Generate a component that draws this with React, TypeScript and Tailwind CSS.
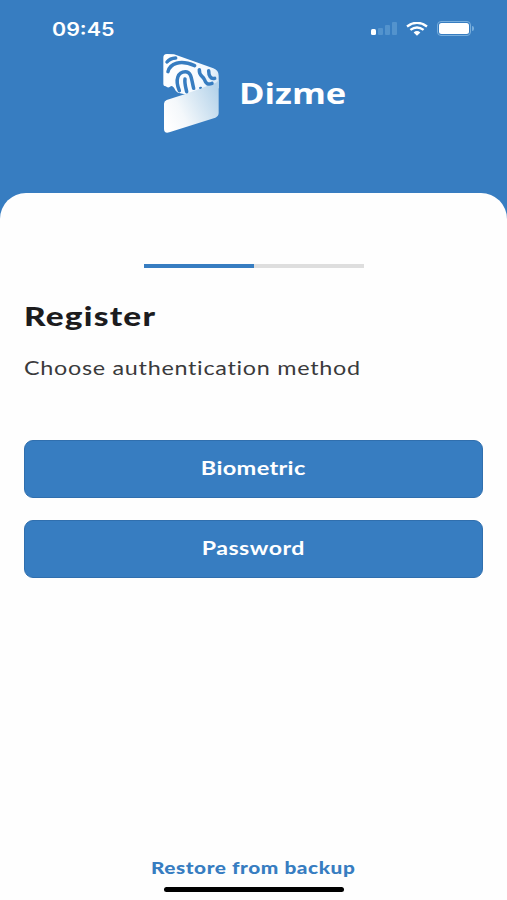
import React from 'react';

interface StretchedTextProps {
  children: React.ReactNode;
  className?: string;
}

const StretchedText: React.FC<StretchedTextProps> = ({ children, className = '' }) => (
  <span className={`inline-block whitespace-nowrap ${className}`}>{children}</span>
);

const DizmeLogo: React.FC = () => (
  <svg className="h-20 w-[58px]" viewBox="36 24 174 240" fill="none">
    <defs>
      <linearGradient id="fold" x1="42" y1="220" x2="206" y2="140" gradientUnits="userSpaceOnUse">
        <stop stopColor="#ffffff" />
        <stop offset="0.3" stopColor="#f4f8fb" />
        <stop offset="1" stopColor="#b5d3ea" />
      </linearGradient>
      <linearGradient id="top" x1="40" y1="60" x2="206" y2="120" gradientUnits="userSpaceOnUse">
        <stop stopColor="#ffffff" />
        <stop offset="0.7" stopColor="#f5faff" />
        <stop offset="1" stopColor="#d3e5f4" />
      </linearGradient>
    </defs>
    <path
      d="M40 38Q40 26 52 27L72 28L190 70Q206 76 206 92V130L104 148L84 143Q76 138 72 128Q66 120 60 125Q54 130 47 124Q40 124 40 118Z"
      fill="url(#top)"
    />
    <path d="M50 165L106 147L150 131L196 114Q206 110 206 100V204Q206 214 196 218L58 262Q42 266 42 252V176Q42 168 50 165Z" fill="url(#fold)" />
    <g stroke="#377dc1" strokeWidth="10.5" strokeLinecap="round">
      <path d="M51 51Q60 40 77 39" />
      <path d="M54 80C60 56 90 43 134 62" />
      <path d="M88 137C74 104 84 80 106 80C125 80 124 104 131 130" />
      <path d="M105 102C103 114 107 126 110 140" />
      <path d="M148 74C147 95 158 91 163 103C167 116 174 120 186 115" />
      <path d="M176 77C176 92 182 103 194 100" />
      <path d="M150 129L153 128" strokeWidth="6" />
    </g>
  </svg>
);

const StatusBar: React.FC = () => (
  <div className="flex h-[57px] items-center justify-between pl-[52px] pr-[33px] text-white">
    <StretchedText className="origin-left scale-x-[1.19] pt-px font-['Inter'] text-[18px] font-semibold">09:45</StretchedText>
    <div className="flex items-center">
      <div className="flex h-[13px] items-end gap-[2px]">
        <span className="h-[6px] w-[5px] rounded-[1.5px] bg-white" />
        <span className="h-[7px] w-[5px] rounded-[1px] bg-[#5393cd]" />
        <span className="h-[10px] w-[5px] rounded-[1px] bg-[#5393cd]" />
        <span className="h-[13px] w-[5px] rounded-[1px] bg-[#5393cd]" />
      </div>
      <svg className="ml-[9px] h-[14px] w-[22px]" viewBox="0 0 22 14" fill="none" stroke="#fff">
        <path d="M1 4.5Q11 -2.8 21 4.5" strokeWidth="2.4" />
        <path d="M4.4 7.9Q11 2.9 17.6 7.9" strokeWidth="2.4" />
        <path d="M7.6 10.5Q11 7.6 14.4 10.5L11 13.7Z" fill="#fff" stroke="none" />
      </svg>
      <div className="ml-[9px] flex h-[15px] w-[34px] rounded-[4px] border border-[#78aedc] p-px">
        <div className="flex-1 rounded-[2.5px] bg-white" />
      </div>
      <span className="ml-px h-[5px] w-[2px] rounded-r-full bg-[#78aedc]" />
    </div>
  </div>
);

const AuthButton: React.FC<{ label: string; textClass: string }> = ({ label, textClass }) => (
  <button className="flex h-[58px] w-full items-center justify-center rounded-[9px] border border-[#306fae] bg-[#377dc1] pb-0.5 text-white">
    <StretchedText className={`text-[19px] font-bold ${textClass}`}>{label}</StretchedText>
  </button>
);

const App: React.FC = () => {
  return (
    <div className="flex h-[900px] w-[507px] flex-col overflow-hidden bg-[#377dc1] font-['Lato',sans-serif]">
      <header className="h-[192.5px] shrink-0">
        <StatusBar />
        <div className="-mt-1 flex items-center pl-[162px] text-white">
          <DizmeLogo />
          <StretchedText className="ml-[19px] origin-left scale-x-[1.19] font-['Open_Sans'] text-[29px] font-bold leading-9">
            Dizme
          </StretchedText>
        </div>
      </header>

      <main className="flex flex-1 flex-col rounded-t-[26px] bg-[#fefefe] px-6">
        <div className="mt-[71.5px] flex h-1 w-[220px] self-center bg-[#dedede]">
          <div className="w-1/2 bg-[#377dc1]" />
        </div>
        <h1 className="mt-[32px] h-8 text-[26.5px] font-black leading-8 text-[#1c1c1e]">
          <StretchedText className="origin-left scale-x-[1.26] tracking-[0.95px]">Register</StretchedText>
        </h1>
        <p className="mt-[22px] h-7 text-[19.5px] leading-7 text-[#3a3a3c]">
          <StretchedText className="origin-left scale-x-[1.197] tracking-[0.6px]">Choose authentication method</StretchedText>
        </p>
        <div className="mt-[58px] flex flex-col gap-[22px]">
          <AuthButton label="Biometric" textClass="scale-x-[1.24] tracking-[0.25px]" />
          <AuthButton label="Password" textClass="scale-x-[1.22] tracking-[0.4px]" />
        </div>
        <footer className="mt-auto flex flex-col items-center pb-2">
          <a className="h-6 text-[16.5px] font-black leading-6 text-[#377dc1]">
            <StretchedText className="scale-x-[1.26] tracking-[0.45px]">Restore from backup</StretchedText>
          </a>
          <div className="mt-[7px] h-[5px] w-[180px] rounded-full bg-black" />
        </footer>
      </main>
    </div>
  );
};

export default App;
